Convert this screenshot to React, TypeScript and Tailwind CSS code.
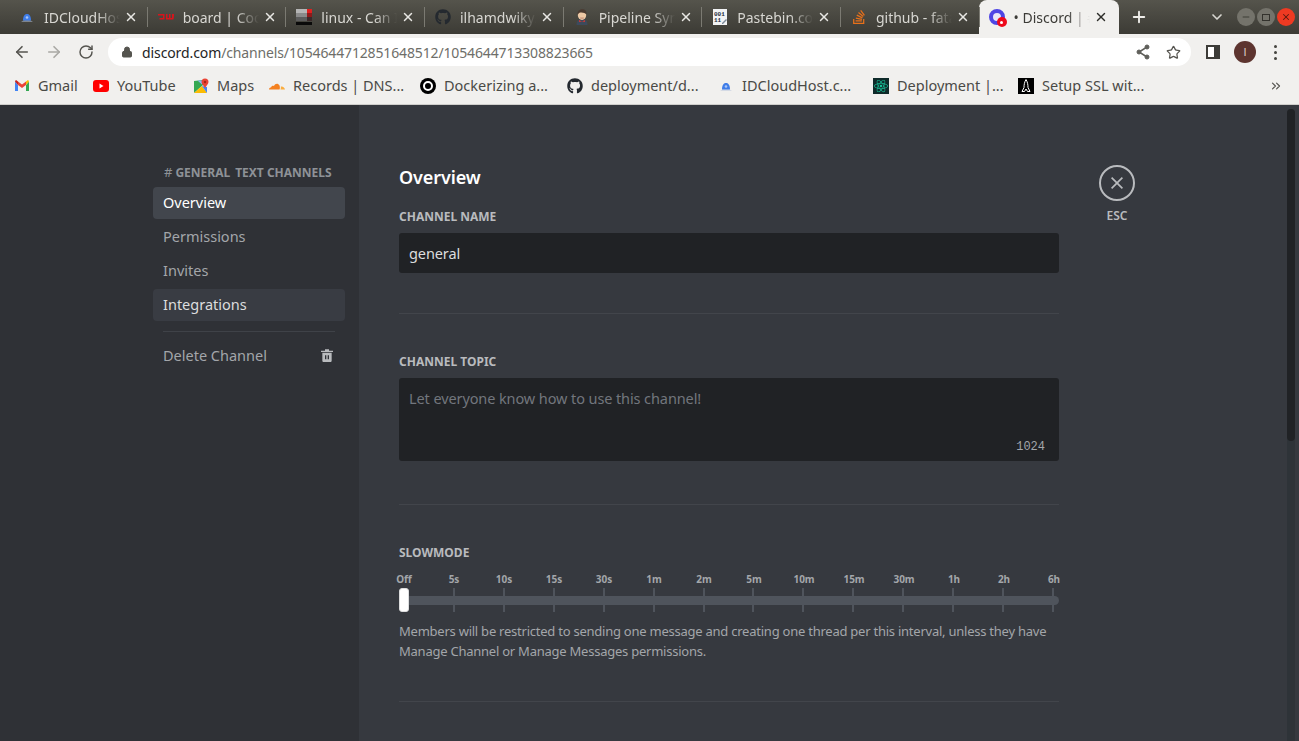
import { ArrowLeft, ArrowRight, RotateCw, Lock, Star, Plus, X, ChevronDown, Minus, ChevronsRight } from "lucide-react";
import { FaGithub, FaReact, FaStackOverflow } from "react-icons/fa";
import type { ReactNode } from "react";

const CloudFav = () => (
  <svg viewBox="0 0 16 16" className="size-4">
    <path d="M2 12.500C3 11 13 11 14 12.500z" fill="#b8c4dc" />
    <path d="M4 11.500c0-5 2-6.500 4-6.500s4 1.500 4 6.500z" fill="#3f7de8" />
    <circle cx="8" cy="8.500" r="1.300" fill="#a9c6f7" />
  </svg>
);

const DevFav = () => (
  <svg viewBox="0 0 16 16" className="size-4">
    <path d="M0 5h6.500v5.500H1.500V9H5V6.500H0zM8 5h1.500v4h1.500V5h1.500v4H14V5h2v1.500l-.5 4H8z" fill="#d8141c" />
  </svg>
);

const StackFav = () => (
  <svg viewBox="0 0 16 16" className="size-4">
    <rect x="0" y="0" width="11" height="4" fill="#b5b5b5" />
    <rect x="11" y="0" width="5" height="4" fill="#e02020" />
    <rect x="0" y="4" width="11" height="4" fill="#8a8a8a" />
    <rect x="11" y="4" width="5" height="4" fill="#8f1a1a" />
    <rect x="0" y="8" width="11" height="4" fill="#5c5c5c" />
    <rect x="11" y="8" width="5" height="4" fill="#3a2a2a" />
    <rect x="0" y="13" width="16" height="3" fill="#0a0a0a" />
  </svg>
);

const JenkinsFav = () => (
  <svg viewBox="0 0 16 16" className="size-4">
    <path d="M2.500 16c0-4 2-6 5.500-6s5.500 2 5.500 6z" fill="#3d4a5c" />
    <ellipse cx="8" cy="6" rx="4.200" ry="5" fill="#eec9a5" />
    <path d="M3.500 6C3 1.500 6 .2 8.500.2S13 2 12.500 5.500C11 4 8 3 5 4z" fill="#4a3a30" />
    <path d="M6 8.500h4l-.5 1.200h-3z" fill="#c9917a" />
    <path d="M5 11l3 1.500L11 11v2l-3-.5L5 13z" fill="#d33833" />
  </svg>
);

const PasteFav = () => (
  <svg viewBox="0 0 16 16" className="size-4">
    <rect x="1" y="0" width="14" height="16" fill="#f2f3f4" />
    <text x="2" y="6.500" fontFamily="Liberation Mono, monospace" fontWeight="700" fontSize="6" fill="#1f2d3d">001</text>
    <text x="2" y="13" fontFamily="Liberation Mono, monospace" fontWeight="700" fontSize="6" fill="#1f2d3d">11</text>
    <path d="M10 14l4-4 1 1-4 4h-1z" fill="#7c8a99" />
  </svg>
);

const DiscordFav = () => (
  <span className="relative size-4 block">
    <span className="block size-4 rounded-full border-[4px] border-[#4e45e4] bg-[#e8e6f8]" />
    <span className="absolute -right-[2px] -bottom-[2px] size-[10px] rounded-full bg-[#ee0a1c] flex items-center justify-center">
      <span className="size-[3px] rounded-full bg-white" />
    </span>
  </span>
);

const TABS: { title: string; icon: ReactNode }[] = [
  { title: "IDCloudHost", icon: <CloudFav /> },
  { title: "board | Coolify", icon: <DevFav /> },
  { title: "linux - Can I", icon: <StackFav /> },
  { title: "ilhamdwiky/", icon: <FaGithub className="size-4 text-[#24292f]" /> },
  { title: "Pipeline Syntax", icon: <JenkinsFav /> },
  { title: "Pastebin.com", icon: <PasteFav /> },
  { title: "github - fatal", icon: <FaStackOverflow className="size-4 text-[#e8701a]" /> },
];

const GmailIcon = () => (
  <svg viewBox="0 0 16 16" className="size-4">
    <path d="M1 3.500v9.500h3V7z" fill="#4285f4" />
    <path d="M12 7v6h3V3.500z" fill="#34a853" />
    <path d="M4 7l4 3 4-3V3.500L8 6.500 4 3.500z" fill="#ea4335" />
    <path d="M1 3.500C1 2.500 2.500 2 3 2.700L4 3.500V7z" fill="#c5221f" />
    <path d="M15 3.500c0-1-1.500-1.500-2-.8l-1 .8V7z" fill="#fbbc04" />
  </svg>
);

const YoutubeIcon = () => (
  <svg viewBox="0 0 16 16" className="size-4">
    <rect x="0" y="2" width="16" height="12" rx="3" fill="#f00" />
    <path d="M6.500 5.500v5l4-2.500z" fill="#fff" />
  </svg>
);

const MapsIcon = () => (
  <svg viewBox="0 0 16 16" className="size-4">
    <path d="M1 3l9-1v5l-9 8z" fill="#34a853" />
    <path d="M1 15l8-7 5 7z" fill="#fbbc04" />
    <path d="M9 8l5 7V9z" fill="#4285f4" />
    <path d="M4.500 2.500h4.500v4z" fill="#8ab4f8" />
    <path d="M12 .5a3.500 3.500 0 0 1 3.500 3.500C15.500 6 13 8 12 10 11 8 8.500 6 8.500 4A3.500 3.500 0 0 1 12 .5z" fill="#ea4335" />
    <circle cx="12" cy="4" r="1.200" fill="#a52714" />
  </svg>
);

const CloudflareIcon = () => (
  <svg viewBox="0 0 16 16" className="size-4">
    <path d="M0 11.500c0-1.500 1-2 2-2 .5-2 2-2 3-1.500C6 5.500 9 5 10.500 7.500 11 9 11 10.500 10.500 11.500z" fill="#f48120" />
    <path d="M11.500 11.500c.5-1 .5-2 .3-3 2-.5 4 1 4.200 3z" fill="#faad3f" />
  </svg>
);

const DockerCircleIcon = () => (
  <span className="block size-4 rounded-full bg-black flex items-center justify-center">
    <span className="block size-[10px] rounded-full border-2 border-white" />
  </span>
);

const RocketIcon = () => (
  <svg viewBox="0 0 16 16" className="size-4">
    <rect width="16" height="16" fill="#000" />
    <path d="M8 1.500c1.500 2.500 2 5 2 8l2 4H9.500L8 11l-1.500 2.500H4l2-4c0-3 .5-5.500 2-8z" fill="none" stroke="#fff" strokeWidth="1" />
  </svg>
);

const ShareIcon = () => (
  <svg viewBox="0 0 16 16" className="size-4 ml-auto" fill="#5f5f5a" stroke="#5f5f5a">
    <path d="M12 3L4 8l8 5" fill="none" strokeWidth="1.500" />
    <circle cx="12" cy="3" r="2" />
    <circle cx="4" cy="8" r="2" />
    <circle cx="12" cy="13" r="2" />
  </svg>
);

const BOOKMARKS: { title: string; icon: ReactNode; width: string }[] = [
  { title: "Gmail", icon: <GmailIcon />, width: "w-[79px]" },
  { title: "YouTube", icon: <YoutubeIcon />, width: "w-[100px]" },
  { title: "Maps", icon: <MapsIcon />, width: "w-[76px]" },
  { title: "Records | DNS...", icon: <CloudflareIcon />, width: "w-[151px]" },
  { title: "Dockerizing a...", icon: <DockerCircleIcon />, width: "w-[147px]" },
  { title: "deployment/d...", icon: <FaGithub className="size-4 text-[#24292f]" />, width: "w-[151px]" },
  { title: "IDCloudHost.c...", icon: <CloudFav />, width: "w-[155px]" },
  { title: "Deployment |...", icon: <span className="size-4 bg-[#0f2b2a] flex items-center justify-center"><FaReact className="size-[14px] text-[#18c39a]" /></span>, width: "w-[145px]" },
  { title: "Setup SSL wit...", icon: <RocketIcon />, width: "w-[130px]" },
];

const NAV = [
  { label: "Overview", cls: "bg-[#42464d] text-white" },
  { label: "Permissions", cls: "text-[#a3a6aa]" },
  { label: "Invites", cls: "text-[#a3a6aa]" },
  { label: "Integrations", cls: "bg-[#393c43] text-[#dcddde]" },
];

const TICKS = ["Off", "5s", "10s", "15s", "30s", "1m", "2m", "5m", "10m", "15m", "30m", "1h", "2h", "6h"];

function ChromeBar() {
  return (
    <div className="shrink-0 font-['Noto_Sans',sans-serif]">
      {/* Tab strip */}
      <div className="h-[34px] pl-[9px] flex bg-gradient-to-b from-[#55544c] to-[#3c3b35]">
        {TABS.map((tab) => (
          <div key={tab.title} className="w-[138.67px] shrink-0 flex items-center relative pl-[10px]">
            <span className="w-4 shrink-0 flex justify-center">{tab.icon}</span>
            <span className="ml-[9px] w-[76px] overflow-hidden whitespace-nowrap text-[14px] text-[#d8d7d2] [mask-image:linear-gradient(to_right,black_70%,transparent)]">
              {tab.title}
            </span>
            <X className="size-[14px] text-[#e8e7e3] ml-[4px]" strokeWidth={2.5} />
            <span className="absolute right-0 top-[7px] h-5 w-px bg-[#7b7a72]" />
          </div>
        ))}
        <div className="w-[140px] shrink-0 -ml-px flex items-center pl-[10px] bg-[#f1f0ee] rounded-t-[8px]">
          <span className="w-4 shrink-0"><DiscordFav /></span>
          <span className="ml-[9px] w-[76px] overflow-hidden whitespace-nowrap text-[14px] text-[#3c3b37] [mask-image:linear-gradient(to_right,black_70%,transparent)]">
            • Discord | #general
          </span>
          <X className="size-[14px] text-[#2d2c29] ml-[4px]" strokeWidth={2.5} />
        </div>
        <Plus className="size-[18px] shrink-0 text-[#efeeea] ml-[11px] self-center" strokeWidth={2.5} />
        <ChevronDown className="size-4 shrink-0 text-[#d8d7d2] ml-[61px] self-center" strokeWidth={2.5} />
        <div className="ml-[12px] flex items-center gap-[2px]">
          <span className="size-[18px] rounded-full bg-[#74736b] flex items-center justify-center">
            <Minus className="size-[10px] text-[#33322d]" strokeWidth={2} />
          </span>
          <span className="size-[18px] rounded-full bg-[#74736b] flex items-center justify-center">
            <span className="block w-[8px] h-[7px] border border-[#33322d]" />
          </span>
          <span className="size-[18px] rounded-full bg-[#ee3a22] flex items-center justify-center">
            <X className="size-[10px] text-[#5a1a10]" strokeWidth={2.5} />
          </span>
        </div>
      </div>

      {/* Address bar */}
      <div className="h-[36px] bg-[#f1f0ee] flex items-center pl-[13px] pr-[13px]">
        <ArrowLeft className="size-[18px] text-[#55544f]" strokeWidth={2.2} />
        <ArrowRight className="size-[18px] text-[#a9a8a4] ml-[14px]" strokeWidth={2.2} />
        <RotateCw className="size-4 text-[#55544f] ml-[15px]" strokeWidth={2.2} />
        <div className="ml-[14px] h-[28px] w-[1083px] rounded-full bg-white flex items-center pl-[13px] pr-[10px]">
          <Lock className="size-[12px] text-[#55544f]" fill="#55544f" />
          <span className="ml-[9px] text-[14px] text-[#25251f] tracking-[-0.1px]">discord.com</span>
          <span className="text-[14px] text-[#6e6e69] tracking-[-0.14px]">/channels/1054644712851648512/1054644713308823665</span>
          <ShareIcon />
          <Star className="size-[15px] text-[#55544f] ml-[15px]" />
        </div>
        <span className="ml-[15px] size-[14px] shrink-0 border-2 border-r-[6px] border-[#3d3c38] bg-white" />
        <span className="ml-[14px] size-[22px] shrink-0 rounded-full bg-[#5d342f] flex items-center justify-center font-['Liberation_Sans',sans-serif] text-[#d9cac7] text-[11px]">I</span>
        <span className="ml-[18px] flex flex-col gap-[3px]">
          <span className="size-[3px] rounded-full bg-[#45443f]" />
          <span className="size-[3px] rounded-full bg-[#45443f]" />
          <span className="size-[3px] rounded-full bg-[#45443f]" />
        </span>
      </div>

      {/* Bookmarks */}
      <div className="h-[35px] pb-[2px] bg-[#f1f0ee] border-b border-[#d0cfcc] flex items-center pl-[14px]">
        {BOOKMARKS.map((b) => (
          <div key={b.title} className={`${b.width} shrink-0 flex items-center gap-[8px]`}>
            <span className="size-4 shrink-0 flex items-center justify-center">{b.icon}</span>
            <span className="text-[14.500px] text-[#4a4a46] whitespace-nowrap">{b.title}</span>
          </div>
        ))}
        <ChevronsRight className="size-[14px] text-[#55544f] ml-[121px]" />
      </div>
    </div>
  );
}

function Sidebar() {
  return (
    <nav className="w-[359px] shrink-0 bg-[#2f3136] pt-[60px] pl-[153px]">
      <div className="w-[192px]">
        <div className="h-[16px] mb-[6px] flex items-center pl-[11px] text-[12px] font-bold text-[#8e9297] whitespace-nowrap">
          <span className="font-normal mr-[3px] text-[13px]">#</span>
          <span className="mr-[5px]">GENERAL</span>
          <span>TEXT CHANNELS</span>
        </div>
        <div className="flex flex-col gap-[2px]">
          {NAV.map((item) => (
            <div key={item.label} className={`h-[32px] px-[10px] rounded-[4px] flex items-center text-[14.500px] ${item.cls}`}>
              {item.label}
            </div>
          ))}
        </div>
        <div className="mx-[10px] mt-[10px] mb-[7px] h-px bg-[#3f4248]" />
        <div className="h-[32px] px-[10px] pt-[1px] flex items-center justify-between text-[14.500px] text-[#a3a6aa]">
          Delete Channel
          <svg viewBox="0 0 24 24" className="size-4" fill="#b9bbbe">
            <path d="M15 3.999V2H9V3.999H3V5.999H21V3.999H15Z" />
            <path d="M5 6.99902V18.999C5 20.101 5.897 20.999 7 20.999H17C18.103 20.999 19 20.101 19 18.999V6.99902H5ZM11 17H9V11H11V17ZM15 17H13V11H15V17Z" />
          </svg>
        </div>
      </div>
    </nav>
  );
}

function Label({ children }: { children: ReactNode }) {
  return <h5 className="h-[16px] flex items-center text-[12px] font-bold text-[#b9bbbe] leading-none">{children}</h5>;
}

function Slider() {
  return (
    <div className="mt-[11px]">
      <div className="flex justify-between px-[5px]">
        {TICKS.map((t) => (
          <span key={t} className="w-0 flex justify-center text-[10px] font-bold text-[#a3a6aa] leading-[14px]">{t}</span>
        ))}
      </div>
      <div className="relative h-[24px] mt-[2px] flex items-center">
        <div className="w-full h-[9px] rounded-[5px] bg-[#4f545c]" />
        <div className="absolute inset-x-[5px] inset-y-0 flex justify-between">
          {TICKS.map((t) => (
            <span key={t} className="w-[2px] -ml-[1px] h-full bg-[#4f545c]" />
          ))}
        </div>
        <div className="absolute left-0 top-0 w-[10px] h-[24px] rounded-[3px] bg-white border border-[#dcddde]" />
      </div>
    </div>
  );
}

function Settings() {
  return (
    <div className="w-[660px] shrink-0 font-['Noto_Sans',sans-serif]">
      <h2 className="h-[24px] flex items-center text-[18px] font-semibold text-white tracking-[-0.1px]">Overview</h2>
      <div className="mt-[20px]"><Label>CHANNEL NAME</Label></div>
      <div className="mt-[8px] h-[40px] rounded-[3px] bg-[#202225] px-[10px] pt-[1px] flex items-center text-[14.500px] tracking-[-0.1px] text-[#dcddde]">general</div>
      <div className="mt-[40px] h-px bg-[#42454b]" />
      <div className="mt-[40px]"><Label>CHANNEL TOPIC</Label></div>
      <div className="mt-[8px] h-[83px] rounded-[3px] bg-[#202225] px-[10px] pt-[10px] relative">
        <span className="text-[14.500px] tracking-[-0.1px] text-[#72767d] leading-[20px] block">Let everyone know how to use this channel!</span>
        <span className="absolute right-[14px] bottom-[5px] font-['Liberation_Mono',monospace] text-[12px] text-[#a3a6aa]">1024</span>
      </div>
      <div className="mt-[43px] h-px bg-[#42454b]" />
      <div className="mt-[40px]"><Label>SLOWMODE</Label></div>
      <Slider />
      <p className="mt-[9px] text-[13px] tracking-[-0.24px] leading-[20px] text-[#a3a6aa]">
        Members will be restricted to sending one message and creating one thread per this interval, unless they have Manage Channel or Manage Messages permissions.
      </p>
      <div className="mt-[40px] h-px bg-[#42454b]" />
    </div>
  );
}

export default function App() {
  return (
    <div className="h-screen overflow-hidden flex flex-col bg-[#36393f] font-['Noto_Sans',sans-serif]">
      <ChromeBar />
      <div className="flex-1 flex min-h-0">
        <Sidebar />
        <main className="flex-1 flex bg-[#36393f] pt-[60px] pl-[40px]">
          <Settings />
          <div className="ml-[40px] w-[36px] shrink-0 flex flex-col items-center">
            <div className="size-[36px] rounded-full border-2 border-[#b9bbbe] flex items-center justify-center">
              <svg viewBox="0 0 24 24" className="size-[18px]" fill="#b9bbbe">
                <path d="M18.400 4L12 10.400L5.600 4L4 5.600L10.400 12L4 18.400L5.600 20L12 13.600L18.400 20L20 18.400L13.600 12L20 5.600L18.400 4Z" />
              </svg>
            </div>
            <span className="mt-[7px] text-[12px] font-semibold text-[#b9bbbe] leading-[16px]">ESC</span>
          </div>
          <div className="ml-auto mr-[4px] -mt-[56px] w-[8px] bg-[#2e3338] rounded-t-[4px]">
            <div className="h-[332px] rounded-[4px] bg-[#202225]" />
          </div>
        </main>
      </div>
    </div>
  );
}
